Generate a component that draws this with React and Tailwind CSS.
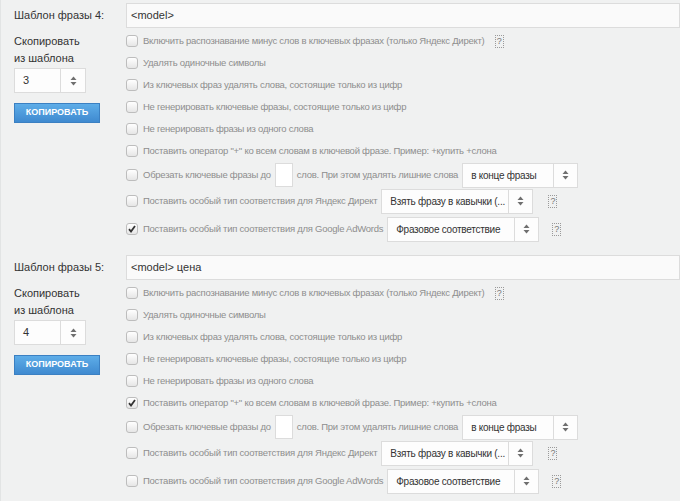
import { useState } from 'react';

const Arrows = () => (
  <svg width="7" height="10" viewBox="0 0 7 10" className="fill-[#6f6f6f]">
    <path d="M3.5 0.5 L6.5 4 L0.5 4 Z" />
    <path d="M3.5 9.5 L6.5 6 L0.5 6 Z" />
  </svg>
);

const Select = ({ value, width, arrowWidth = 'w-[24px]', textSize = 'text-[10px]' }) => (
  <div className={`flex h-[25px] shrink-0 items-stretch border border-[#dcdcdc] bg-[#fdfdfd] ${width}`}>
    <div className={`flex min-w-0 flex-1 items-center overflow-hidden whitespace-nowrap pl-[8px] text-[#333] ${textSize}`}>
      {value}
    </div>
    <div className={`flex shrink-0 items-center justify-center border-l border-[#dcdcdc] ${arrowWidth}`}>
      <Arrows />
    </div>
  </div>
);

const Help = ({ className = 'ml-[10px]' }) => (
  <span className={`inline-flex h-[13px] w-[9px] shrink-0 items-center justify-center border border-dotted border-[#9a9a9a] text-[9px] leading-none text-[#777] ${className}`}>
    ?
  </span>
);

const Checkbox = ({ checked }) => (
  <span className="mr-[5px] flex h-[12px] w-[12px] shrink-0 items-center justify-center rounded-[3px] border border-[#bdbdbd] bg-gradient-to-b from-white to-[#e6e6e6]">
    {checked && (
      <svg width="8" height="8" viewBox="0 0 8 8">
        <path d="M1 4.2 L3 6.5 L7 1" fill="none" stroke="#333" strokeWidth="1.8" />
      </svg>
    )}
  </span>
);

const Row = ({ checked, className = 'h-[22px]', children }) => (
  <div className={`flex items-center whitespace-nowrap text-[9.5px] tracking-[-0.25px] text-[#8e8e8e] ${className}`}>
    <Checkbox checked={checked} />
    {children}
  </div>
);

const Block = ({ num, phrase, from, plusChecked, adwordsChecked }) => (
  <div className="flex pb-[13px]">
    <div className="w-[125px] shrink-0 pl-[13px]">
      <div className="flex h-[25px] items-center text-[11px] text-[#333]">Шаблон фразы {num}:</div>
      <div className="mt-[5px] text-[11px] leading-[17px] text-[#333]">
        Скопировать<br />из шаблона
      </div>
      <div className="mt-[1px] w-[72px]">
        <Select value={from} width="w-[72px]" arrowWidth="w-[25px]" textSize="text-[11px]" />
      </div>
      <button className="mt-[10px] flex h-[20px] w-[86px] items-center justify-center border border-[#3b80c2] bg-gradient-to-b from-[#5eade8] to-[#3f8ad0] text-[9px] font-bold text-white">
        КОПИРОВАТЬ
      </button>
    </div>
    <div className="min-w-0 flex-1">
      <div className="flex h-[25px] items-center border border-[#dcdcdc] bg-[#fafafa] pl-[4px] text-[11px] text-[#333]">
        {phrase}
      </div>
      <div className="mt-[2px] flex flex-col">
        <Row>
          Включить распознавание минус слов в ключевых фразах (только Яндекс Директ)
          <Help />
        </Row>
        <Row>Удалять одиночные символы</Row>
        <Row>Из ключевых фраз удалять слова, состоящие только из цифр</Row>
        <Row>Не генерировать ключевые фразы, состоящие только из цифр</Row>
        <Row>Не генерировать фразы из одного слова</Row>
        <Row checked={plusChecked}>Поставить оператор "+" ко всем словам в ключевой фразе. Пример: +купить +слона</Row>
        <Row className="h-[26px]">
          Обрезать ключевые фразы до
          <span className="mx-[4px] h-[24px] w-[18px] shrink-0 border border-[#dcdcdc] bg-white" />
          слов. При этом удалять лишние слова
          <span className="ml-[4px]">
            <Select value="в конце фразы" width="w-[116px]" />
          </span>
        </Row>
        <Row className="h-[26px]">
          Поставить особый тип соответствия для Яндекс Директ
          <span className="ml-[4px]">
            <Select value="Взять фразу в кавычки (..." width="w-[152px]" />
          </span>
          <Help className="ml-[15px]" />
        </Row>
        <Row checked={adwordsChecked} className="mt-[2px] h-[26px]">
          Поставить особый тип соответствия для Google AdWords
          <span className="ml-[4px]">
            <Select value="Фразовое соответствие" width="w-[152px]" />
          </span>
          <Help className="ml-[13px]" />
        </Row>
      </div>
    </div>
  </div>
);

export default function App() {
  const [blocks] = useState([
    { num: 4, phrase: '<model>', from: '3', plusChecked: false, adwordsChecked: true },
    { num: 5, phrase: '<model> цена', from: '4', plusChecked: true, adwordsChecked: false },
  ]);

  return (
    <div className="min-h-screen border-l border-[#e2e4e4] bg-[#f0f1f1] pt-[3px] font-['Liberation_Sans',sans-serif]">
      {blocks.map(b => (
        <Block key={b.num} {...b} />
      ))}
    </div>
  );
}
